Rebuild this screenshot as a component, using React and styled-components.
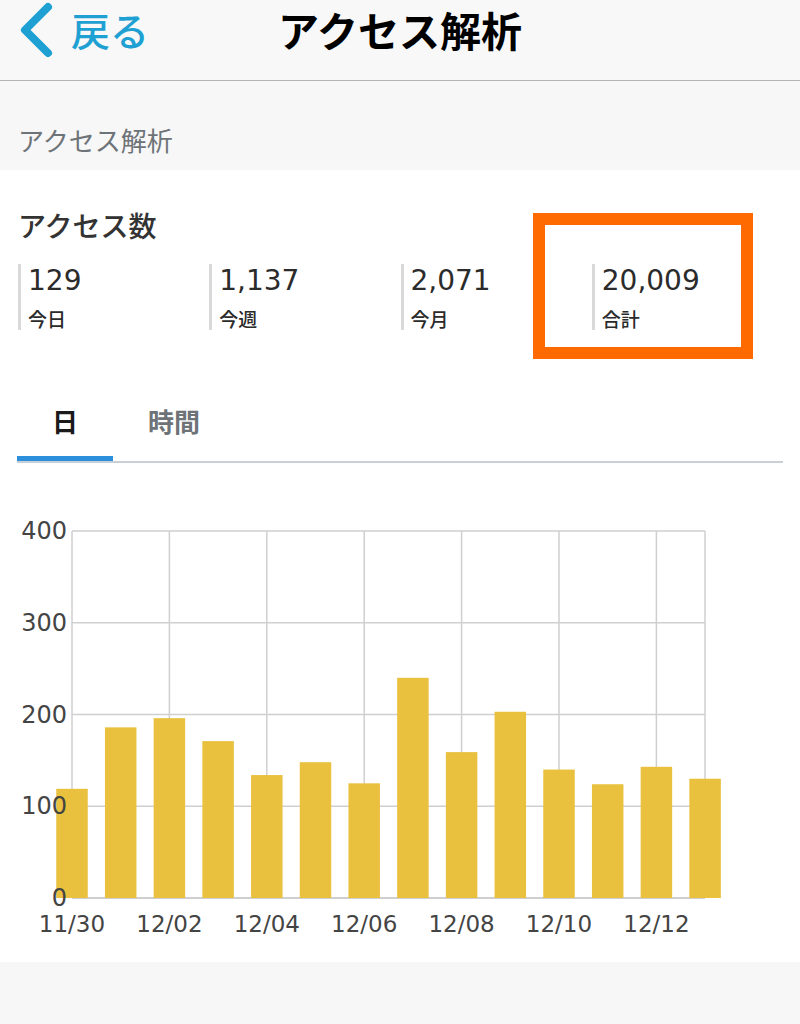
import React from 'react';
import styled, { createGlobalStyle } from 'styled-components';

const GlobalStyle = createGlobalStyle`
  body {
    margin: 0;
    background: #f7f7f7;
    font-family: "Noto Sans CJK JP", "Noto Sans", sans-serif;
  }
`;

const Page = styled.div`
  width: 800px;
  min-height: 1024px;
  background: #f7f7f7;
`;

const NavBar = styled.header`
  display: grid;
  grid-template-columns: 1fr auto 1fr;
  align-items: center;
  height: 81px;
  padding-bottom: 21px;
  box-sizing: border-box;
  background: #f8f8f8;
  border-bottom: 1px solid #b4b4b4;
`;

const BackButton = styled.div`
  display: flex;
  align-items: center;
  gap: 16px;
  padding-left: 15px;
  color: #1ea1d2;
  font-size: 39px;
  font-weight: 500;
  line-height: 1;
  svg {
    display: block;
  }
`;

const NavTitle = styled.h1`
  margin: 0;
  font-size: 41px;
  font-weight: 700;
  color: #000;
  line-height: 1;
`;

const SectionBand = styled.div`
  padding: 44px 18px 15px;
  font-size: 26px;
  line-height: 30px;
  color: #6e7378;
`;

const Card = styled.section`
  position: relative;
  background: #fff;
`;

const Summary = styled.div`
  padding: 38px 17px 0 18px;
`;

const Heading = styled.h2`
  margin: 0;
  font-size: 28px;
  line-height: 34px;
  font-weight: 500;
  color: #333;
`;

const StatGrid = styled.div`
  display: grid;
  grid-template-columns: repeat(4, 1fr);
  margin-top: 22px;
`;

const Stat = styled.div`
  border-left: 3px solid #d9d9d9;
  padding-left: 7px;
  height: 66px;
`;

const StatValue = styled.div`
  font-family: "DejaVu Sans", "Liberation Sans", sans-serif;
  font-size: 28px;
  line-height: 34px;
  color: #2b2b2b;
`;

const StatLabel = styled.div`
  margin-top: 11px;
  font-size: 19px;
  line-height: 20px;
  font-weight: 500;
  color: #2b2b2b;
`;

const Highlight = styled.div`
  position: absolute;
  left: 533px;
  top: 43px;
  width: 220px;
  height: 146px;
  box-sizing: border-box;
  border: 12px solid #ff6a00;
  pointer-events: none;
`;

const TabBar = styled.div`
  display: flex;
  margin: 50px 0 0 -1px;
  border-bottom: 2px solid #c8cfd6;
`;

const Tab = styled.div`
  display: flex;
  align-items: center;
  justify-content: center;
  height: 81px;
  padding: 0 35px;
  box-sizing: border-box;
  font-size: 26px;
  font-weight: 700;
  color: ${(p) => (p.$active ? '#1a1a1a' : '#6e7378')};
  box-shadow: ${(p) => (p.$active ? 'inset 0 -5px 0 #2b8fdc' : 'none')};
`;

const ChartWrap = styled.div`
  svg {
    display: block;
  }
  text {
    font-family: "DejaVu Sans", "Liberation Sans", sans-serif;
    fill: #444;
  }
`;

const stats = [
  { value: '129', label: '今日' },
  { value: '1,137', label: '今週' },
  { value: '2,071', label: '今月' },
  { value: '20,009', label: '合計' },
];

const days = [
  ['11/30', 119], ['12/01', 186], ['12/02', 196], ['12/03', 171],
  ['12/04', 134], ['12/05', 148], ['12/06', 125], ['12/07', 240],
  ['12/08', 159], ['12/09', 203], ['12/10', 140], ['12/11', 124],
  ['12/12', 143], ['12/13', 130],
];

const PLOT = { left: 72, right: 705, top: 68, bottom: 435 };
const STEP = 48.7;
const BAR_W = 31.5;
const yOf = (v) => PLOT.bottom - (v / 400) * (PLOT.bottom - PLOT.top);

const BarChart = () => (
  <ChartWrap>
    <svg width="800" height="499" viewBox="0 0 800 499">
      {[100, 200, 300, 400].map((v) => (
        <line key={v} x1={PLOT.left} x2={PLOT.right} y1={yOf(v)} y2={yOf(v)} stroke="#cfcfcf" strokeWidth="1.5" />
      ))}
      {[1, 2, 3, 4, 5, 6].map((i) => {
        const x = PLOT.left + i * STEP * 2;
        return <line key={i} x1={x} x2={x} y1={PLOT.top} y2={PLOT.bottom} stroke="#cfcfcf" strokeWidth="1.5" />;
      })}
      <line x1={PLOT.left} x2={PLOT.left} y1={PLOT.top} y2={PLOT.bottom} stroke="#cfcfcf" strokeWidth="1.5" />
      <line x1={PLOT.right} x2={PLOT.right} y1={PLOT.top} y2={PLOT.bottom} stroke="#cfcfcf" strokeWidth="1.5" />
      <line x1={PLOT.left} x2={PLOT.right} y1={PLOT.bottom} y2={PLOT.bottom} stroke="#cfcfcf" strokeWidth="2" />
      {days.map(([d, v], i) => {
        const cx = PLOT.left + i * STEP;
        return <rect key={d} x={cx - BAR_W / 2} y={yOf(v)} width={BAR_W} height={PLOT.bottom - yOf(v)} fill="#e9c13f" />;
      })}
      {[0, 100, 200, 300, 400].map((v) => (
        <text key={v} x="67" y={yOf(v)} fontSize="24" textAnchor="end" dominantBaseline="central">{v}</text>
      ))}
      {days.filter((_, i) => i % 2 === 0).map(([d], k) => (
        <text key={d} x={PLOT.left + k * STEP * 2} y="461" fontSize="23" textAnchor="middle" dominantBaseline="central">{d}</text>
      ))}
    </svg>
  </ChartWrap>
);

export default function App() {
  return (
    <Page>
      <GlobalStyle />
      <NavBar>
        <BackButton>
          <svg width="40" height="56" viewBox="0 0 40 56">
            <polyline points="33,5 10,28 33,51" fill="none" stroke="#1ea1d2" strokeWidth="8" strokeLinecap="round" strokeLinejoin="round" />
          </svg>
          <span>戻る</span>
        </BackButton>
        <NavTitle>アクセス解析</NavTitle>
        <div />
      </NavBar>
      <SectionBand>アクセス解析</SectionBand>
      <Card>
        <Summary>
          <Heading>アクセス数</Heading>
          <StatGrid>
            {stats.map((s) => (
              <Stat key={s.label}>
                <StatValue>{s.value}</StatValue>
                <StatLabel>{s.label}</StatLabel>
              </Stat>
            ))}
          </StatGrid>
          <TabBar>
            <Tab $active>日</Tab>
            <Tab>時間</Tab>
          </TabBar>
        </Summary>
        <BarChart />
        <Highlight />
      </Card>
    </Page>
  );
}
